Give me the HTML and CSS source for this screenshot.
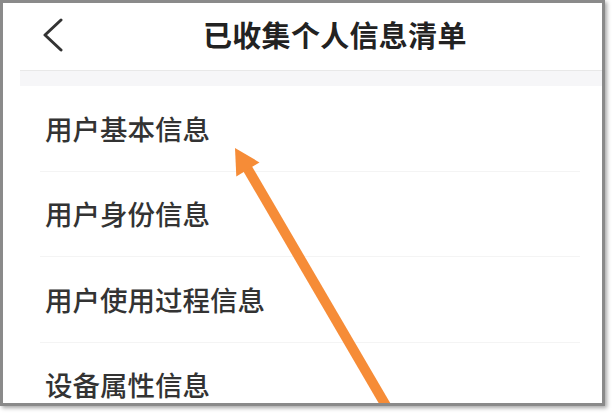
FILE: index.html
```html
<!DOCTYPE html>
<html lang="zh-CN">
<head>
<meta charset="utf-8">
<link rel="stylesheet" href="styles.css">
</head>
<body>
<div class="frame">
  <div class="header">
    <svg class="back" width="20" height="34" viewBox="0 0 20 34"><polyline points="18,2 2,17 18,32" fill="none" stroke="#333" stroke-width="3" stroke-linecap="round" stroke-linejoin="round"/></svg>
    <div class="title">已收集个人信息清单</div>
  </div>
  <div class="band"></div>
  <ul class="list">
    <li class="item">用户基本信息</li>
    <li class="item">用户身份信息</li>
    <li class="item">用户使用过程信息</li>
    <li class="item">设备属性信息</li>
  </ul>
  <svg class="arrow" width="613" height="413" viewBox="0 0 613 413">
    <line x1="392" y1="416" x2="246" y2="166" stroke="#f68c37" stroke-width="10"/>
    <polygon points="235,148 236.3,176.4 259.5,162.4" fill="#f68c37"/>
  </svg>
</div>
</body>
</html>
```

FILE: styles.css
```css
html, body {
  margin: 0;
  padding: 0;
  background: #ffffff;
}
body {
  width: 613px;
  height: 413px;
  overflow: hidden;
  font-family: "Noto Sans CJK SC", "Noto Sans", sans-serif;
}
.frame {
  position: relative;
  box-sizing: border-box;
  width: 605px;
  height: 406px;
  border: 3px solid #8a8a8a;
  box-shadow: 2px 2px 4px rgba(0, 0, 0, 0.35);
  background: #ffffff;
  overflow: hidden;
}
.header {
  height: 67px;
  display: flex;
  align-items: center;
  padding-left: 40px;
}
.back {
  display: block;
  margin-top: -3px;
}
.title {
  margin-left: 140px;
  font-size: 29px;
  font-weight: 700;
  color: #222;
  letter-spacing: 0.3px;
  line-height: 1;
  margin-top: -4px;
}
.band {
  margin-left: 17px;
  height: 15px;
  border-top: 1px solid #e8e8e8;
  background: #f6f6f8;
}
.list {
  list-style: none;
  margin: 0;
  padding: 0;
}
.item {
  box-sizing: border-box;
  height: 85.5px;
  margin-left: 37px;
  margin-right: 22px;
  padding-left: 5px;
  display: flex;
  align-items: center;
  font-size: 27.5px;
  font-weight: 500;
  color: #333;
  border-bottom: 1px solid #f4f4f4;
  line-height: 1;
}
.arrow {
  position: absolute;
  left: -3px;
  top: -3px;
}
```
